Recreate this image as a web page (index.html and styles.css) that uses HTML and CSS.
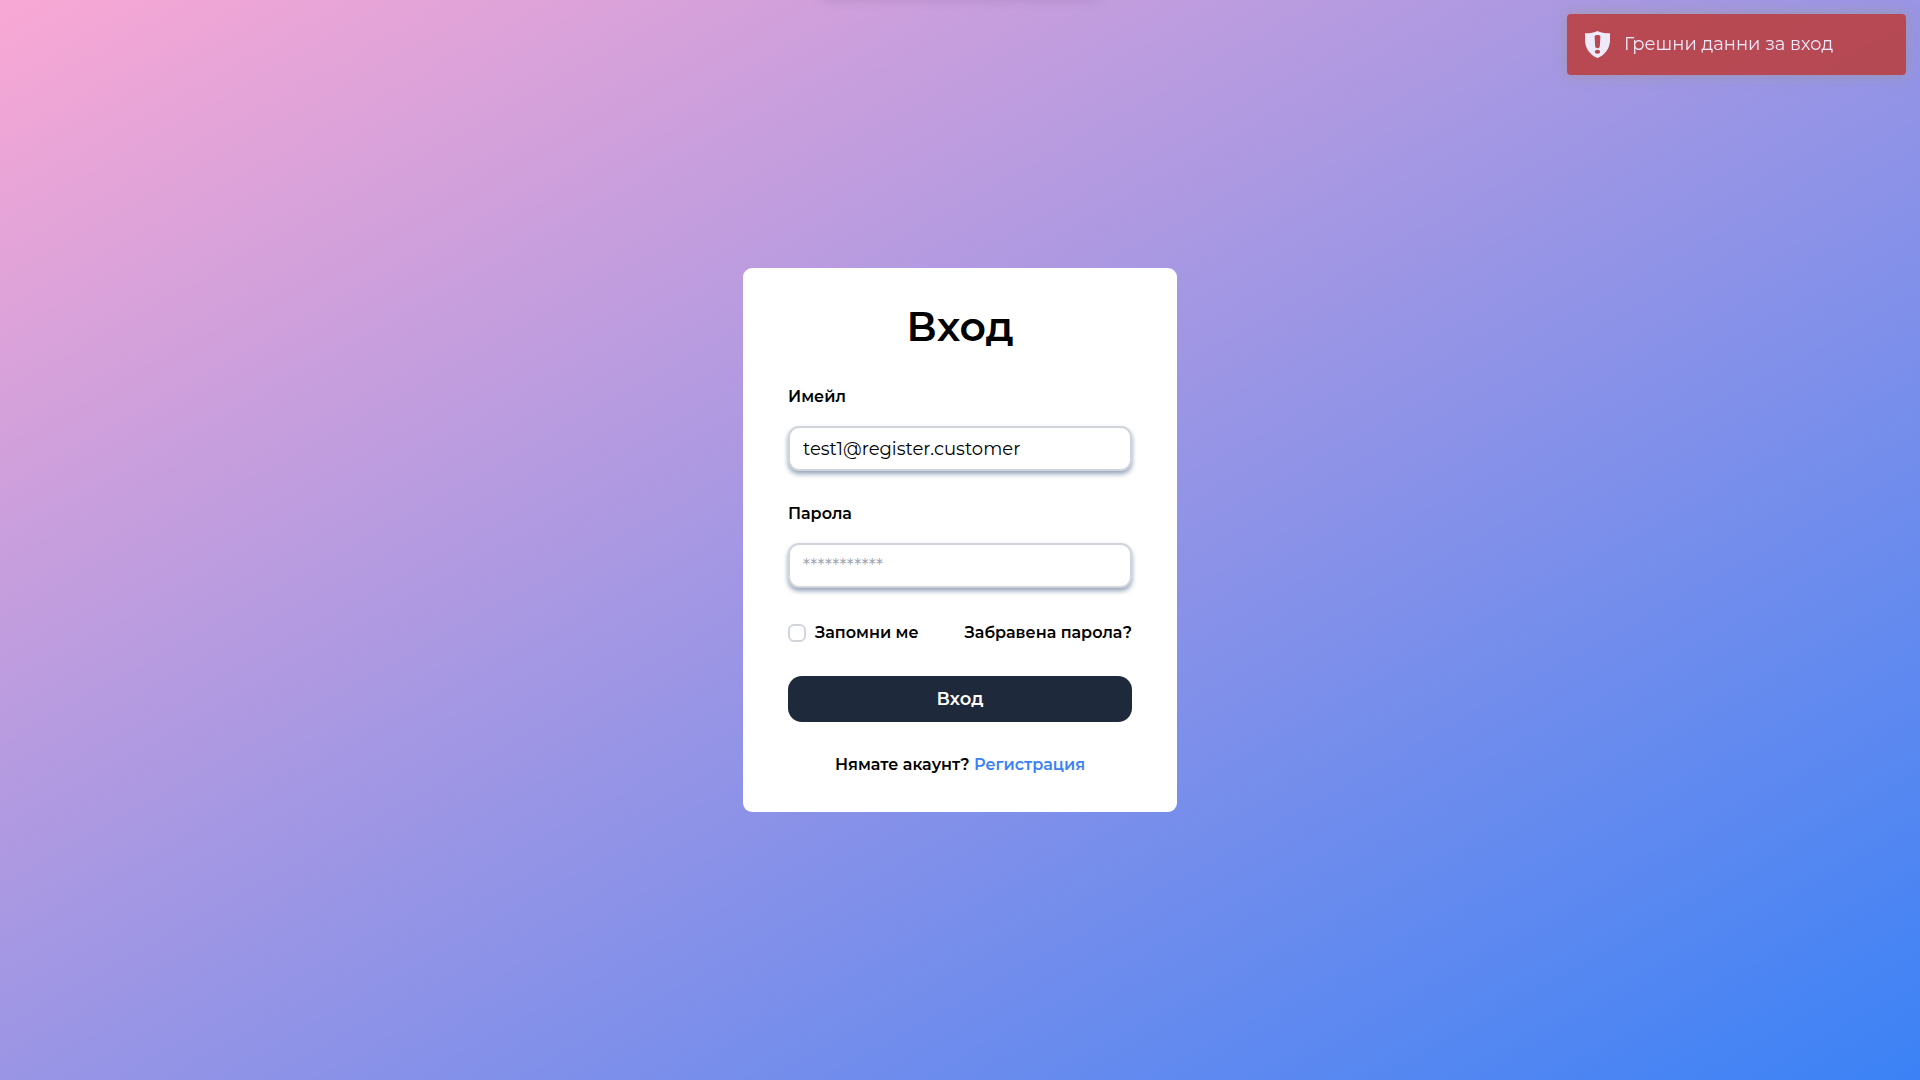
FILE: index.html
```html
<!DOCTYPE html>
<html lang="en">
<head>
<meta charset="utf-8">
<meta name="viewport" content="width=device-width, initial-scale=1">
<title>Вход</title>
<link rel="stylesheet" href="styles.css">
</head>
<body>
<div class="top-drawer"></div>
<div class="toast" role="alert">
  <svg class="toast-icon" viewBox="0 0 25 27" aria-hidden="true">
    <path fill="currentColor" fill-rule="evenodd" d="M12.500 0C9.500 1.700 5.500 2.200 0 2.300V10C0.500 17.500 5 24 12.500 27C20 24 24.500 17.500 25 10V2.300C19.500 2.200 15.500 1.700 12.500 0ZM12.500 4C14.500 4 15.500 4.600 15.400 5.800L14.800 15.500C14.700 17.700 10.300 17.700 10.200 15.500L9.600 5.800C9.500 4.600 10.500 4 12.500 4ZM12.500 18.800C16 18.800 16 22.800 12.500 22.800C9 22.800 9 18.800 12.500 18.800Z"/>
  </svg>
  <span>Грешни данни за вход</span>
</div>
<main class="page">
  <form class="card">
    <h1 class="title">Вход</h1>
    <div class="field">
      <label class="label" for="email">Имейл</label>
      <input class="input" id="email" type="email" value="test1@register.customer">
    </div>
    <div class="field">
      <label class="label" for="password">Парола</label>
      <input class="input" id="password" type="password" placeholder="***********">
    </div>
    <div class="options">
      <div class="remember">
        <input class="checkbox" id="remember" type="checkbox">
        <label for="remember">Запомни ме</label>
      </div>
      <a class="forgot" href="#">Забравена парола?</a>
    </div>
    <button class="submit" type="submit">Вход</button>
    <p class="signup">Нямате акаунт? <a class="signup-link" href="#">Регистрация</a></p>
  </form>
</main>
</body>
</html>
```
FILE: styles.css
```css
* {
  box-sizing: border-box;
}

body {
  margin: 0;
  font-family: "Montserrat", "Inter", sans-serif;
  font-size: 16px;
  line-height: 24px;
  color: #000;
}

.page {
  min-height: 100vh;
  display: flex;
  align-items: center;
  justify-content: center;
  background: linear-gradient(to bottom right, #f9a8d4, #3b82f6);
}

.card {
  width: 100%;
  max-width: 434px;
  padding: 36px 45px 35px;
  border-radius: 9px;
  background: #fff;
  font-weight: 600;
}

.title {
  margin: 0 0 36px;
  font-size: 41px;
  line-height: 45px;
  font-weight: 600;
  text-align: center;
}

.field {
  display: flex;
  flex-direction: column;
  gap: 17px;
  margin-bottom: 31px;
}

.input {
  width: 100%;
  height: 45px;
  padding: 0 13px;
  border: 2px solid #d1d5db;
  border-radius: 11px;
  background: #fff;
  box-shadow: 0 3px 5px #94a3b8;
  font-family: inherit;
  font-size: 18px;
  color: #000;
}

.input::placeholder {
  color: #9ca3af;
}

.options {
  display: flex;
  align-items: center;
  justify-content: space-between;
  margin: 33px 0 31px;
}

.remember {
  display: flex;
  align-items: center;
  gap: 9px;
}

.checkbox {
  appearance: none;
  width: 18px;
  height: 18px;
  margin: 0;
  border: 2px solid #d1d5db;
  border-radius: 6px;
  background: #fff;
}

.checkbox:checked {
  background: #1e293b;
}

.forgot {
  color: inherit;
  text-decoration: none;
}

.submit {
  display: block;
  width: 100%;
  height: 46px;
  border: 0;
  border-radius: 14px;
  background: #1e293b;
  color: #fff;
  font-family: inherit;
  font-size: 18px;
  font-weight: 600;
  cursor: pointer;
}

.signup {
  margin: 31px 0 0;
  text-align: center;
}

.signup-link {
  color: #3b82f6;
  text-decoration: none;
}

.toast {
  position: fixed;
  top: 14px;
  right: 14px;
  display: flex;
  align-items: center;
  gap: 14px;
  width: 339px;
  padding: 17px 18px;
  border-radius: 4px;
  background: #bd362f;
  box-shadow: 0 0 14px #999;
  color: #fff;
  font-size: 18px;
  line-height: 27px;
  opacity: 0.8;
}

.toast-icon {
  flex: none;
  width: 25px;
  height: 27px;
}

/* Collapsed drawer above the viewport; only its shadow shows */
.top-drawer {
  position: fixed;
  top: -10px;
  left: 50%;
  width: 276px;
  height: 8px;
  transform: translateX(-50%);
  box-shadow: 0 0 12px rgba(90, 70, 110, 0.3);
}
```
